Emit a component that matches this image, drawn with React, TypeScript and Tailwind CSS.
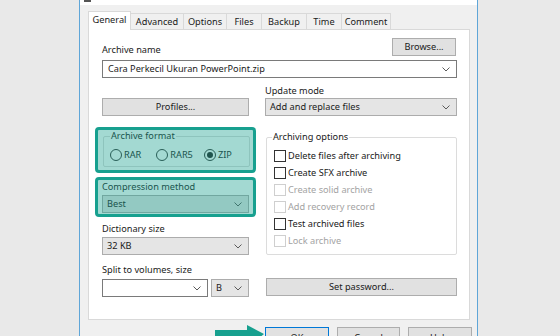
import React from "react";

const Chevron = () => (
  <svg width="8" height="5" viewBox="0 0 8 5" className="shrink-0">
    <polyline points="0.5,0.5 4,4 7.5,0.5" fill="none" stroke="#5a5a5a" strokeWidth="1" />
  </svg>
);

const Combo = ({ text, white, className = "" }: { text: string; white?: boolean; className?: string }) => (
  <div
    className={`flex items-center justify-between h-[18px] pl-[4px] pr-[6px] border ${
      white ? "bg-white border-[#7a7a7a]" : "bg-[#e5e5e5] border-[#acacac]"
    } ${className}`}
  >
    <span className="leading-[16px] whitespace-nowrap">{text}</span>
    <Chevron />
  </div>
);

const Button = ({ text, className = "" }: { text: string; className?: string }) => (
  <div
    className={`flex items-center justify-center h-[18px] bg-[#e1e1e1] border border-[#adadad] leading-[16px] ${className}`}
  >
    {text}
  </div>
);

const Radio = ({ label, checked }: { label: string; checked?: boolean }) => (
  <div className="flex items-center h-[14px]">
    <div className="w-[12px] h-[12px] rounded-full border border-[#333] bg-white flex items-center justify-center">
      {checked && <div className="w-[6px] h-[6px] rounded-full bg-[#222]" />}
    </div>
    <span className="ml-[2px] leading-[14px]">{label}</span>
  </div>
);

const Check = ({ label, disabled }: { label: string; disabled?: boolean }) => (
  <div className="flex items-center h-[17px]">
    <div
      className={`w-[12px] h-[12px] border bg-white ${disabled ? "border-[#cfcfcf]" : "border-[#333]"}`}
    />
    <span className={`ml-[2px] leading-[14px] whitespace-nowrap ${disabled ? "text-[#a3a3a3]" : ""}`}>
      {label}
    </span>
  </div>
);

const Highlight = () => (
  <div className="absolute inset-0 rounded-[4px] border-[3px] border-[#17a08f] bg-[#1aa08f]/40 pointer-events-none" />
);

const tabs: { name: string; w: string }[] = [
  { name: "General", w: "w-[43px]" },
  { name: "Advanced", w: "w-[53px]" },
  { name: "Options", w: "w-[43px]" },
  { name: "Files", w: "w-[35px]" },
  { name: "Backup", w: "w-[45px]" },
  { name: "Time", w: "w-[35px]" },
  { name: "Comment", w: "w-[49px]" },
];

export default function App() {
  return (
    <div
      className="relative w-[560px] h-[336px] overflow-hidden flex bg-[#e9e9e9] text-[9.2px] text-[#1a1a1a]"
      style={{ fontFamily: '"Noto Sans", "Open Sans", sans-serif' }}
    >
      <div className="w-[79px] shrink-0" />
      <div className="w-[399px] shrink-0 flex flex-col bg-[#f0f0f0] border-x border-[#5fa6d8]">
        {/* title bar remnant */}
        <div className="h-[5px] shrink-0 bg-white relative">
          <div className="ml-[4px] w-[7px] h-[2px] bg-[#555]" />
        </div>
        {/* tabs */}
        <div className="mt-[6px] ml-[8px] flex items-end h-[18px] shrink-0">
          {tabs.map((t, i) =>
            i === 0 ? (
              <div
                key={t.name}
                className={`${t.w} h-[19px] -mb-px relative z-10 bg-white border-x border-t border-[#d9d9d9] flex items-center justify-center pb-[2px] leading-[14px]`}
              >
                {t.name}
              </div>
            ) : (
              <div
                key={t.name}
                className={`${t.w} h-[16px] border-t border-r border-[#d9d9d9] flex items-center justify-center leading-[14px]`}
              >
                {t.name}
              </div>
            )
          )}
        </div>
        {/* panel */}
        <div className="ml-[8px] w-[382px] h-[291px] shrink-0 bg-white border border-[#d9d9d9] pl-[13px] pr-[12px] pt-[8px]">
          <div className="flex items-end justify-between h-[18px]">
            <span className="leading-[12px]">Archive name</span>
            <Button text="Browse..." className="w-[64px] mr-[1px]" />
          </div>
          <Combo text="Cara Perkecil Ukuran PowerPoint.zip" white className="mt-[4px] pl-[5px]" />

          <div className="mt-[6px] grid grid-cols-[147px_192px] gap-x-[16px]">
            <div className="flex flex-col justify-end">
              <Button text="Profiles..." />
            </div>
            <div className="flex flex-col">
              <div className="h-[14px] leading-[14px]">Update mode</div>
              <Combo text="Add and replace files" />
            </div>
          </div>

          <div className="grid grid-cols-[147px_192px] gap-x-[16px]">
            {/* left column */}
            <div className="flex flex-col">
              <div className="relative mt-[11px] -mx-[7px] pl-[8px] pr-[6px] pt-[9px] pb-[6px]">
                <div className="relative h-[31px] border border-[#dcdcdc] rounded-[2px]">
                  <div className="absolute -top-[7px] left-[6px] px-[1px] bg-white leading-[12px]">
                    Archive format
                  </div>
                  <div className="flex items-center mt-[11px] pl-[6px]">
                    <Radio label="RAR" />
                    <div className="ml-[15px]">
                      <Radio label="RAR5" />
                    </div>
                    <div className="ml-[11px]">
                      <Radio label="ZIP" checked />
                    </div>
                  </div>
                </div>
                <Highlight />
              </div>

              <div className="relative mt-[4px] -mx-[7px] px-[7px] pt-[3px] pb-[4px]">
                <div className="h-[14px] leading-[14px]">Compression method</div>
                <Combo text="Best" className="mt-[1px]" />
                <Highlight />
              </div>

              <div className="mt-[5px] h-[14px] leading-[14px]">Dictionary size</div>
              <Combo text="32 KB" className="mt-[1px]" />

              <div className="mt-[8px] h-[14px] leading-[14px]">Split to volumes, size</div>
              <div className="mt-[2px] flex gap-[3px]">
                <Combo text="" white className="w-[106px]" />
                <Combo text="B" className="w-[38px]" />
              </div>
            </div>

            {/* right column */}
            <div className="flex flex-col">
              <div className="relative mt-[21px] ml-[1px] border border-[#dcdcdc] rounded-[2px] pl-[7px] pt-[9px] pb-[5px]">
                <div className="absolute -top-[7px] left-[5px] px-[1px] bg-white leading-[12px]">
                  Archiving options
                </div>
                <Check label="Delete files after archiving" />
                <Check label="Create SFX archive" />
                <Check label="Create solid archive" disabled />
                <Check label="Add recovery record" disabled />
                <Check label="Test archived files" />
                <Check label="Lock archive" disabled />
              </div>
              <Button text="Set password..." className="mt-[23px] ml-[1px] w-[191px]" />
            </div>
          </div>
        </div>
        {/* bottom buttons */}
        <div className="mt-[7px] shrink-0 flex justify-end pr-[5px] gap-[8px]">
          <div className="w-[64px] h-[23px] shrink-0 bg-[#e1e1e1] border border-[#0078d7] flex justify-center pt-[4px] leading-[12px]">
            OK
          </div>
          <div className="w-[63px] h-[23px] shrink-0 bg-[#e1e1e1] border border-[#adadad] flex justify-center pt-[4px] leading-[12px]">
            Cancel
          </div>
          <div className="w-[64px] h-[23px] shrink-0 bg-[#e1e1e1] border border-[#adadad] flex justify-center pt-[4px] leading-[12px]">
            Help
          </div>
        </div>
      </div>
      {/* annotation arrow */}
      <svg className="absolute left-[212px] top-[322px]" width="56" height="30" viewBox="0 0 56 30">
        <rect x="3" y="8" width="34" height="8" fill="#17a08f" />
        <polygon points="35,3 52,12 35,26" fill="#17a08f" />
      </svg>
    </div>
  );
}
